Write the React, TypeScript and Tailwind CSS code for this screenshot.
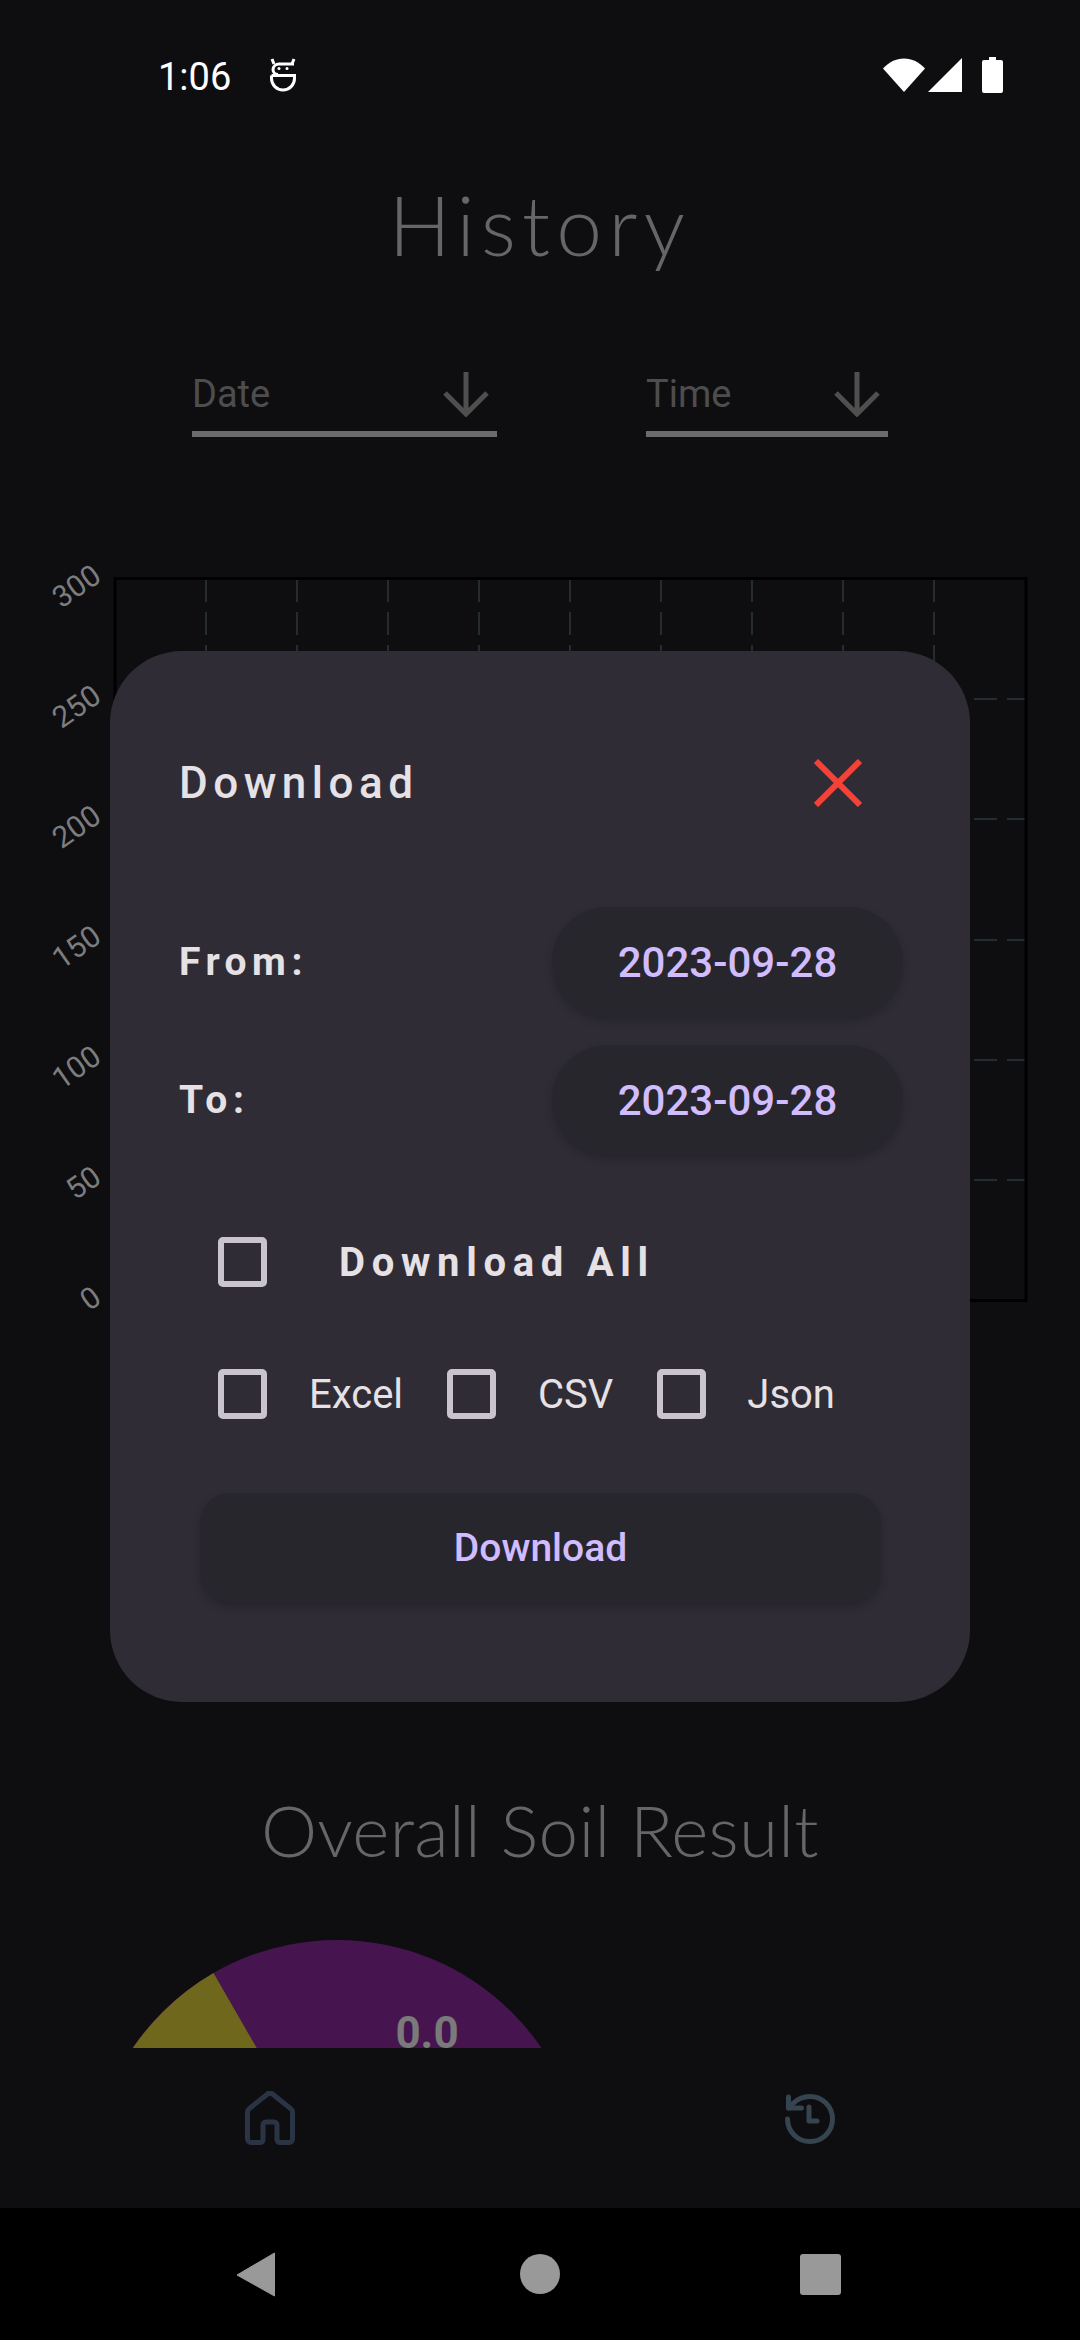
const ticks = ["300", "250", "200", "150", "100", "50", "0"]

function StatusBar() {
  return (
    <div className="flex h-[150px] items-start justify-between pl-[158px] pr-[77px] pt-[55px]">
      <div className="flex items-center gap-[39px]">
        <span className="text-[38px] leading-[44px] text-white">1:06</span>
        <svg viewBox="0 0 26 34" className="mb-[4px] h-[34px] w-[26px]" fill="none" stroke="#fff" strokeWidth="3">
          <path d="M1.500 17.500h23v3a11.500 11.500 0 0 1-23 0v-3" />
          <path d="M24 6H9a6 6 0 0 0-6 5.500 5 5 0 0 0 5 5" />
          <path d="M4 6 2 1M22 6l2-5" />
          <circle cx="9" cy="10.500" r="1.500" fill="#fff" stroke="none" />
          <circle cx="17" cy="10.500" r="1.500" fill="#fff" stroke="none" />
        </svg>
      </div>
      <div className="flex items-center pt-[2px]">
        <svg viewBox="0 0 42 34" className="h-[34px] w-[42px]" fill="#fff">
          <path d="M21 34 0 10.500C6 4 13 .500 21 .500S36 4 42 10.500z" />
        </svg>
        <svg viewBox="0 0 34 34" className="ml-[3px] h-[34px] w-[34px]" fill="#fff">
          <path d="M34 0v34H0z" />
        </svg>
        <svg viewBox="0 0 21 36" className="ml-[20px] h-[36px] w-[21px]" fill="#fff">
          <path d="M7 0h7v3h5a2 2 0 0 1 2 2v29a2 2 0 0 1-2 2H2a2 2 0 0 1-2-2V5a2 2 0 0 1 2-2h5z" />
        </svg>
      </div>
    </div>
  )
}

function FieldArrow() {
  return (
    <svg viewBox="0 0 46 46" className="h-[46px] w-[46px]" fill="none" stroke="#4f4f4f" strokeWidth="5">
      <path d="M23 1v42M2 22l21 21 21-21" />
    </svg>
  )
}

function Field({ label, width }: { label: string; width: string }) {
  return (
    <div className={`${width} border-b-[6px] border-[#6b6b6b] pb-[14px]`}>
      <div className="flex items-center justify-between pr-[8px]">
        <span className="text-[38px] leading-[46px] text-[#4d4d4d]">{label}</span>
        <FieldArrow />
      </div>
    </div>
  )
}

function Chart() {
  const xs = [206, 297, 388, 479, 570, 661, 752, 843, 934]
  const ys = [699, 819, 940, 1060, 1180]
  return (
    <svg viewBox="0 560 1080 770" className="block h-[770px] w-[1080px] overflow-visible">
      {xs.map((x) => (
        <line key={x} x1={x} y1="579" x2={x} y2="1300" stroke="#3a4a55" strokeWidth="1" strokeDasharray="23 10" />
      ))}
      {ys.map((y) => (
        <line key={y} x1="116" y1={y} x2="1026" y2={y} stroke="#3a4a55" strokeWidth="1" strokeDasharray="23 10" />
      ))}
      <rect x="115" y="578.500" width="911" height="722" fill="none" stroke="#000" strokeWidth="3" />
      {ticks.map((t, i) => {
        const y = 580 + i * 120.3
        return (
          <text
            key={t}
            x="103"
            y={y}
            textAnchor="end"
            transform={`rotate(-35 103 ${y})`}
            fill="#7d7d7d"
            fontFamily="Roboto"
            fontSize="30"
          >
            {t}
          </text>
        )
      })}
    </svg>
  )
}

function Gauge() {
  return (
    <svg viewBox="0 1920 1080 128" className="block h-[128px] w-[1080px]">
      <circle cx="337" cy="2187.600" r="247.600" fill="#46154f" />
      <path d="M337 2187.600 213.500 1973A247.600 247.600 0 0 0 90 2187.600z" fill="#6f671c" />
      <text x="427" y="2048" textAnchor="middle" fill="#7a7a7a" fontFamily="Roboto" fontWeight="700" fontSize="44">
        0.0
      </text>
    </svg>
  )
}

function Check() {
  return <div className="h-[50px] w-[49px] shrink-0 rounded-[5px] border-[6px] border-[#cac4d0]" />
}

function DateRow({ label }: { label: string }) {
  return (
    <div className="flex items-center justify-between">
      <span className="text-[39px] font-bold tracking-[5.500px] text-[#e6e1e5]">{label}</span>
      <div className="flex h-[110px] w-[351px] items-center justify-center rounded-[55px] bg-[#28262d] text-[42px] font-medium text-[#d0bcff] shadow-[0_4px_8px_rgba(0,0,0,0.2)]">
        2023-09-28
      </div>
    </div>
  )
}

function DownloadDialog() {
  return (
    <div className="absolute left-[110px] top-[651px] flex h-[1051px] w-[860px] flex-col rounded-[72px] bg-[#2f2c36] pl-[69px] pr-[67px] pt-[106px]">
      <div className="flex items-center justify-between pr-[41px]">
        <span className="text-[44px] font-medium leading-[52px] tracking-[5.500px] text-[#e6e1e5]">Download</span>
        <svg viewBox="0 0 48 48" className="h-[48px] w-[48px]" fill="none" stroke="#f44336" strokeWidth="6">
          <path d="M2 2l44 44M46 2 2 46" />
        </svg>
      </div>
      <div className="mt-[98px] flex flex-col gap-[28px]">
        <DateRow label="From:" />
        <DateRow label="To:" />
      </div>
      <div className="mt-[82px] flex items-center pl-[39px]">
        <Check />
        <span className="ml-[72px] pt-[2px] text-[40px] font-bold leading-[48px] tracking-[6.700px] text-[#e6e1e5]">Download All</span>
      </div>
      <div className="mt-[82px] flex items-center pl-[39px] text-[40px] leading-[48px] text-[#e6e1e5]">
        <Check />
        <span className="ml-[42px] pt-[2px]">Excel</span>
        <div className="ml-[44px]">
          <Check />
        </div>
        <span className="ml-[42px] pt-[2px]">CSV</span>
        <div className="ml-[44px]">
          <Check />
        </div>
        <span className="ml-[41px] pt-[2px]">Json</span>
      </div>
      <div className="ml-[21px] mr-[22px] mt-[74px] flex h-[110px] items-center justify-center rounded-[30px] bg-[#28262d] text-[39px] font-medium text-[#d0bcff] shadow-[0_4px_8px_rgba(0,0,0,0.2)]">
        Download
      </div>
    </div>
  )
}

export default function App() {
  return (
    <div className="relative flex h-[2340px] w-[1080px] flex-col overflow-hidden bg-[#0e0e11] font-['Roboto',sans-serif]">
      <StatusBar />
      <h1 className="mt-[29px] text-center font-['Lato',sans-serif] text-[82px] font-light leading-[90px] tracking-[6.300px] text-[#666]">
        History
      </h1>
      <div className="mt-[102px] flex gap-[149px] pl-[192px]">
        <Field label="Date" width="w-[305px]" />
        <Field label="Time" width="w-[242px]" />
      </div>
      <div className="mt-[123px]">
        <Chart />
      </div>
      <h2 className="mt-[460px] text-center font-['Lato',sans-serif] text-[71px] font-light leading-[80px] tracking-[0.300px] text-[#666]">
        Overall Soil Result
      </h2>
      <div className="mt-[50px]">
        <Gauge />
      </div>
      <div className="flex flex-1 items-start justify-between px-[245px] pt-[43px]">
        <svg viewBox="0 0 50 54" className="h-[54px] w-[50px]" fill="none" stroke="#2b3444" strokeWidth="5">
          <path d="M6 51.500a3.500 3.500 0 0 1-3.500-3.500V21q0-2 2-3.500L22.500 3q2.500-1.500 5 0l18 14.500q2 1.500 2 3.500v27a3.500 3.500 0 0 1-3.500 3.500h-9a3 3 0 0 1-3-3V34a3 3 0 0 0-3-3h-8a3 3 0 0 0-3 3v14.500a3 3 0 0 1-3 3z" />
        </svg>
        <svg viewBox="0 0 50 50" className="mt-[3px] h-[50px] w-[50px]" fill="none" stroke="#35444e" strokeWidth="5" strokeLinecap="round" strokeLinejoin="round">
          <path d="M2.500 25a22.500 22.500 0 1 0 22.500-22.500A24 24 0 0 0 8 9.500L3.500 14" />
          <path d="M3.500 3v11h13" />
          <path d="M24 13v14h8" />
        </svg>
      </div>
      <div className="flex h-[132px] items-center bg-black pl-[236px]">
        <svg viewBox="0 0 39 45" className="h-[45px] w-[39px]" fill="#999">
          <path d="M38.500 1v43L1 23z" stroke="#999" strokeLinejoin="round" strokeWidth="1" />
        </svg>
        <div className="ml-[245px] h-[40px] w-[40px] rounded-full bg-[#999]" />
        <div className="ml-[240px] h-[41px] w-[41px] rounded-[3px] bg-[#999]" />
      </div>
      <DownloadDialog />
    </div>
  )
}
